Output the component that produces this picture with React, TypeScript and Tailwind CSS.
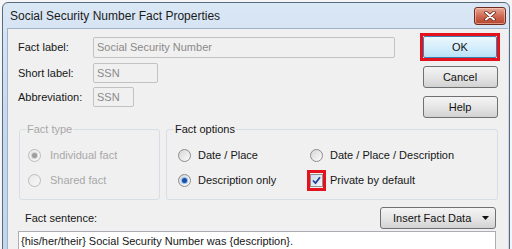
import React from 'react'

function Radio({ checked, disabled }: { checked?: boolean; disabled?: boolean }) {
  return (
    <span
      className={
        disabled
          ? 'flex h-[13px] w-[13px] shrink-0 items-center justify-center rounded-full border border-[#bcbcbc] bg-gradient-to-br from-[#e9e9e9] to-[#f8f8f8]'
          : 'flex h-[13px] w-[13px] shrink-0 items-center justify-center rounded-full border border-[#8c8c8c] bg-gradient-to-br from-[#d6d6d6] to-[#fcfcfc]'
      }
    >
      {checked && (
        <span
          className={
            disabled
              ? 'h-[5px] w-[5px] rounded-full bg-[#9d9d9d] shadow-[0_0_0_1px_#d4d4d4]'
              : 'h-[5px] w-[5px] rounded-full bg-[#1a4fa8] shadow-[0_0_0_1px_#8fc0ee]'
          }
        />
      )}
    </span>
  )
}

function Checkbox() {
  return (
    <span className="flex h-[13px] w-[13px] items-center justify-center border border-[#8e8f8f] bg-gradient-to-br from-[#cfdcec] to-[#f2f6fb]">
      <svg width="9" height="9" viewBox="0 0 9 9">
        <path d="M1 4.5 L3.5 7.2 L8 1.2" fill="none" stroke="#21409a" strokeWidth="1.8" />
      </svg>
    </span>
  )
}

function WinButton({ children, className = '' }: { children: React.ReactNode; className?: string }) {
  return (
    <div
      className={
        'flex h-[22px] items-center justify-center rounded-[3px] border border-[#707070] bg-gradient-to-b from-[#f4f4f4] via-[#e6e6e6] to-[#d2d2d2] text-[11px] text-[#111] ' +
        className
      }
    >
      {children}
    </div>
  )
}

function Field({ value, width }: { value: string; width: string }) {
  return (
    <div className={`flex h-full items-center rounded-[2px] border border-[#c2c2c2] bg-[#f0f0f0] pl-[3px] text-[11px] text-[#8a8a8a] ${width}`}>
      {value}
    </div>
  )
}

export default function App() {
  return (
    <div className="h-[249px] w-[512px] overflow-hidden bg-[#f3f5f7] pl-[2px] pt-[2px] font-['Liberation_Sans',Arial,sans-serif]">
      <div className="h-[260px] w-[508px] rounded-t-[6px] border border-[#5b6b7e] bg-gradient-to-b from-[#dae7f5] via-[#c6d8ed] to-[#c2d6ec]">
        {/* Title bar */}
        <div className="flex h-[25px] items-start">
          <div className="ml-[7px] mt-[6px] text-[12px] leading-[14px] text-[#1b1b1b]">
            Social Security Number Fact Properties
          </div>
          <div className="ml-auto mr-[3px] mt-[4px] flex h-[18px] w-[32px] items-center justify-center rounded-[3px] border border-[#6e2c21] bg-gradient-to-b from-[#e8a897] via-[#cf6a53] to-[#b8412a] shadow-[inset_0_0_0_1px_rgba(255,220,210,0.5)]">
            <svg width="12" height="10" viewBox="0 0 12 10">
              <path d="M2 1.5 L10 8.5 M10 1.5 L2 8.5" stroke="#5a1f16" strokeWidth="3.4" strokeLinecap="round" />
              <path d="M2 1.5 L10 8.5 M10 1.5 L2 8.5" stroke="#ffffff" strokeWidth="2" strokeLinecap="round" />
            </svg>
          </div>
        </div>

        {/* Client area */}
        <div className="ml-[4px] mr-[1px] h-[240px] border-l border-t border-[#9fb2c8] bg-[#f0f0f0] text-[11px] text-[#161616]">
          <div className="flex h-[90px] items-start">
            <div className="ml-[10px] mt-[8px] flex flex-col">
              <div className="flex h-[21px] items-center">
                <span className="w-[75px]">Fact label:</span>
                <Field value="Social Security Number" width="w-[302px]" />
              </div>
              <div className="mt-[5px] flex h-[20px] items-center">
                <span className="w-[75px]">Short label:</span>
                <Field value="SSN" width="w-[65px]" />
              </div>
              <div className="mt-[4px] flex h-[20px] items-center">
                <span className="w-[75px]">Abbreviation:</span>
                <Field value="SSN" width="w-[41px]" />
              </div>
            </div>

            <div className="ml-auto mr-[8px] mt-[4px] flex flex-col items-center">
              <div className="border-[3px] border-[#e4121c]">
                <div className="flex h-[22px] w-[74px] items-center justify-center rounded-[2px] border border-[#3c7fb1] bg-gradient-to-b from-[#ecf7fd] via-[#d6effc] to-[#b9e1f7] text-[11px] text-[#111]">
                  OK
                </div>
              </div>
              <WinButton className="mt-[5px] w-[75px]">Cancel</WinButton>
              <WinButton className="mt-[8px] w-[75px]">Help</WinButton>
            </div>
          </div>

          {/* Group boxes */}
          <div className="ml-[11px] mt-[4px] flex gap-[6px]">
            <fieldset className="h-[77px] w-[141px] rounded-[3px] border border-[#d5dfe5]">
              <legend className="ml-[6px] px-[1px] leading-[13px] text-[#a8a8a8]">Fact type</legend>
              <div className="ml-[8px] mt-[11px] flex h-[17px] items-center gap-[9px] text-[#a8a8a8]">
                <Radio checked disabled />
                <span>Individual fact</span>
              </div>
              <div className="ml-[8px] mt-[8px] flex h-[17px] items-center gap-[9px] text-[#a8a8a8]">
                <Radio disabled />
                <span>Shared fact</span>
              </div>
            </fieldset>

            <fieldset className="h-[77px] w-[332px] rounded-[3px] border border-[#d5dfe5]">
              <legend className="ml-[7px] px-[1px] leading-[13px] text-[#161616]">Fact options</legend>
              <div className="ml-[11px] mt-[11px] grid grid-cols-[132px_1fr] gap-y-[8px]">
                <div className="flex h-[17px] items-center gap-[7px]">
                  <Radio />
                  <span>Date / Place</span>
                </div>
                <div className="flex h-[17px] items-center gap-[7px]">
                  <Radio />
                  <span>Date / Place / Description</span>
                </div>
                <div className="flex h-[17px] items-center gap-[7px]">
                  <Radio checked />
                  <span>Description only</span>
                </div>
                <div className="flex h-[17px] items-center gap-[4px]">
                  <span className="-ml-[3px] flex h-[21px] w-[19px] items-center justify-center border-[3px] border-[#e4121c]">
                    <Checkbox />
                  </span>
                  <span>Private by default</span>
                </div>
              </div>
            </fieldset>
          </div>

          {/* Fact sentence */}
          <div className="ml-[10px] mt-[7px] flex w-[478px] items-center">
            <span className="pl-[7px]">Fact sentence:</span>
            <WinButton className="ml-auto w-[116px] justify-start pl-[12px]">
              <span>Insert Fact Data</span>
              <svg className="ml-auto mr-[6px]" width="7" height="4" viewBox="0 0 7 4">
                <path d="M0 0 H7 L3.5 4 Z" fill="#111" />
              </svg>
            </WinButton>
          </div>
          <div className="ml-[10px] mt-[2px] h-[40px] w-[478px] border border-[#abadb3] bg-white px-[2px] pt-[2px] leading-[14px]">
            {'{his/her/their} Social Security Number was {description}.'}
          </div>
        </div>
      </div>
    </div>
  )
}
